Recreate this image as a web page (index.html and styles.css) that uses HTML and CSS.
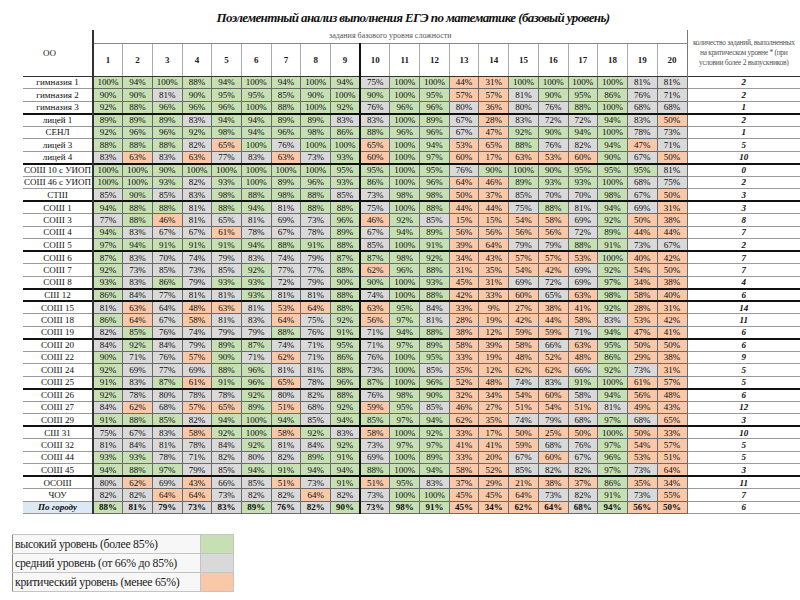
FILE: index.html
```html
<!DOCTYPE html>
<html lang="ru">
<head>
<meta charset="utf-8">
<title>Поэлементный анализ</title>
<link rel="stylesheet" href="styles.css">
</head>
<body>
<h1 class="title">Поэлементный анализ выполнения ЕГЭ по математике (базовый уровень)</h1>
<table class="grid">
<colgroup><col class="c-oo"><col class="c-n"><col class="c-n"><col class="c-n"><col class="c-n"><col class="c-n"><col class="c-n"><col class="c-n"><col class="c-n"><col class="c-n"><col class="c-n"><col class="c-n"><col class="c-n"><col class="c-n"><col class="c-n"><col class="c-n"><col class="c-n"><col class="c-n"><col class="c-n"><col class="c-n"><col class="c-n"><col class="c-cnt"></colgroup>
<thead>
<tr class="h1"><th rowspan="2" class="oo-h">ОО</th><th colspan="20" class="sub">задания базового уровня сложности</th><th rowspan="2" class="cnt-h">количество заданий, выполненных<br>на критическом уровне * (при<br>условии более 2 выпускников)</th></tr>
<tr class="h2"><th>1</th><th>2</th><th>3</th><th>4</th><th>5</th><th>6</th><th>7</th><th>8</th><th>9</th><th>10</th><th>11</th><th>12</th><th>13</th><th>14</th><th>15</th><th>16</th><th>17</th><th>18</th><th>19</th><th>20</th></tr>
</thead>
<tbody>
<tr class="first"><td class="oo">гимназия 1</td><td class="g">100%</td><td class="g">94%</td><td class="g">100%</td><td class="g">88%</td><td class="g">94%</td><td class="g">100%</td><td class="g">94%</td><td class="g">100%</td><td class="g">94%</td><td class="s">75%</td><td class="g">100%</td><td class="g">100%</td><td class="o">44%</td><td class="o">31%</td><td class="g">100%</td><td class="g">100%</td><td class="g">100%</td><td class="g">100%</td><td class="s">81%</td><td class="s">81%</td><td class="cnt">2</td></tr>
<tr><td class="oo">гимназия 2</td><td class="g">90%</td><td class="g">90%</td><td class="s">81%</td><td class="g">90%</td><td class="g">95%</td><td class="g">95%</td><td class="g">85%</td><td class="g">90%</td><td class="g">100%</td><td class="g">90%</td><td class="g">100%</td><td class="g">95%</td><td class="o">57%</td><td class="o">57%</td><td class="s">81%</td><td class="g">90%</td><td class="g">95%</td><td class="g">86%</td><td class="s">76%</td><td class="s">71%</td><td class="cnt">2</td></tr>
<tr><td class="oo">гимназия 3</td><td class="g">92%</td><td class="g">88%</td><td class="g">96%</td><td class="g">96%</td><td class="g">96%</td><td class="g">100%</td><td class="g">88%</td><td class="g">100%</td><td class="g">92%</td><td class="s">76%</td><td class="g">96%</td><td class="g">96%</td><td class="s">80%</td><td class="o">36%</td><td class="s">80%</td><td class="s">76%</td><td class="g">88%</td><td class="g">100%</td><td class="s">68%</td><td class="s">68%</td><td class="cnt">1</td></tr>
<tr class="grp"><td class="oo">лицей 1</td><td class="g">89%</td><td class="g">89%</td><td class="g">89%</td><td class="s">83%</td><td class="g">94%</td><td class="g">94%</td><td class="g">89%</td><td class="g">89%</td><td class="s">83%</td><td class="s">83%</td><td class="g">100%</td><td class="g">89%</td><td class="s">67%</td><td class="o">28%</td><td class="s">83%</td><td class="s">72%</td><td class="s">72%</td><td class="g">94%</td><td class="s">83%</td><td class="o">50%</td><td class="cnt">2</td></tr>
<tr><td class="oo">СЕНЛ</td><td class="g">92%</td><td class="g">96%</td><td class="g">96%</td><td class="g">92%</td><td class="g">98%</td><td class="g">94%</td><td class="g">96%</td><td class="g">98%</td><td class="g">86%</td><td class="g">88%</td><td class="g">96%</td><td class="g">96%</td><td class="s">67%</td><td class="o">47%</td><td class="g">92%</td><td class="g">90%</td><td class="g">94%</td><td class="g">100%</td><td class="s">78%</td><td class="s">73%</td><td class="cnt">1</td></tr>
<tr><td class="oo">лицей 3</td><td class="g">88%</td><td class="g">88%</td><td class="g">88%</td><td class="s">82%</td><td class="o">65%</td><td class="g">100%</td><td class="s">76%</td><td class="g">100%</td><td class="g">100%</td><td class="o">65%</td><td class="g">100%</td><td class="g">94%</td><td class="o">53%</td><td class="o">65%</td><td class="g">88%</td><td class="s">76%</td><td class="s">82%</td><td class="g">94%</td><td class="o">47%</td><td class="s">71%</td><td class="cnt">5</td></tr>
<tr><td class="oo">лицей 4</td><td class="s">83%</td><td class="o">63%</td><td class="s">83%</td><td class="o">63%</td><td class="s">77%</td><td class="s">83%</td><td class="o">63%</td><td class="s">73%</td><td class="g">93%</td><td class="o">60%</td><td class="g">100%</td><td class="g">97%</td><td class="o">60%</td><td class="o">17%</td><td class="o">63%</td><td class="o">53%</td><td class="o">60%</td><td class="g">90%</td><td class="s">67%</td><td class="o">50%</td><td class="cnt">10</td></tr>
<tr class="grp"><td class="oo">СОШ 10 с УИОП</td><td class="g">100%</td><td class="g">100%</td><td class="g">90%</td><td class="g">100%</td><td class="g">100%</td><td class="g">100%</td><td class="g">100%</td><td class="g">100%</td><td class="g">95%</td><td class="g">95%</td><td class="g">100%</td><td class="g">95%</td><td class="s">76%</td><td class="g">90%</td><td class="g">100%</td><td class="g">90%</td><td class="g">95%</td><td class="g">95%</td><td class="g">95%</td><td class="s">81%</td><td class="cnt">0</td></tr>
<tr><td class="oo">СОШ 46 с УИОП</td><td class="g">100%</td><td class="g">100%</td><td class="g">93%</td><td class="s">82%</td><td class="g">93%</td><td class="g">100%</td><td class="g">89%</td><td class="g">96%</td><td class="g">93%</td><td class="g">86%</td><td class="g">100%</td><td class="g">96%</td><td class="o">64%</td><td class="o">46%</td><td class="g">89%</td><td class="g">93%</td><td class="g">93%</td><td class="g">100%</td><td class="s">68%</td><td class="s">75%</td><td class="cnt">2</td></tr>
<tr><td class="oo">СТШ</td><td class="s">85%</td><td class="g">90%</td><td class="s">85%</td><td class="s">83%</td><td class="g">98%</td><td class="g">88%</td><td class="g">98%</td><td class="g">88%</td><td class="s">85%</td><td class="s">73%</td><td class="g">98%</td><td class="g">98%</td><td class="o">50%</td><td class="o">37%</td><td class="s">85%</td><td class="s">70%</td><td class="s">70%</td><td class="g">98%</td><td class="s">67%</td><td class="o">50%</td><td class="cnt">3</td></tr>
<tr class="grp"><td class="oo">СОШ 1</td><td class="g">94%</td><td class="g">88%</td><td class="g">88%</td><td class="s">81%</td><td class="g">88%</td><td class="g">94%</td><td class="s">81%</td><td class="g">88%</td><td class="g">88%</td><td class="s">75%</td><td class="g">100%</td><td class="g">88%</td><td class="o">44%</td><td class="o">44%</td><td class="s">75%</td><td class="g">88%</td><td class="s">81%</td><td class="g">94%</td><td class="s">69%</td><td class="o">31%</td><td class="cnt">3</td></tr>
<tr><td class="oo">СОШ 3</td><td class="s">77%</td><td class="g">88%</td><td class="o">46%</td><td class="s">81%</td><td class="s">65%</td><td class="s">81%</td><td class="s">69%</td><td class="s">73%</td><td class="g">96%</td><td class="o">46%</td><td class="g">92%</td><td class="s">85%</td><td class="o">15%</td><td class="o">15%</td><td class="o">54%</td><td class="o">58%</td><td class="s">69%</td><td class="g">92%</td><td class="o">50%</td><td class="o">38%</td><td class="cnt">8</td></tr>
<tr><td class="oo">СОШ 4</td><td class="g">94%</td><td class="s">83%</td><td class="s">67%</td><td class="s">67%</td><td class="o">61%</td><td class="s">78%</td><td class="s">67%</td><td class="s">78%</td><td class="g">89%</td><td class="s">67%</td><td class="g">94%</td><td class="g">89%</td><td class="o">56%</td><td class="o">56%</td><td class="o">56%</td><td class="o">56%</td><td class="s">72%</td><td class="g">89%</td><td class="o">44%</td><td class="o">44%</td><td class="cnt">7</td></tr>
<tr><td class="oo">СОШ 5</td><td class="g">97%</td><td class="g">94%</td><td class="g">91%</td><td class="g">91%</td><td class="g">91%</td><td class="g">94%</td><td class="g">88%</td><td class="g">91%</td><td class="g">88%</td><td class="s">85%</td><td class="g">100%</td><td class="g">91%</td><td class="o">39%</td><td class="o">64%</td><td class="s">79%</td><td class="s">79%</td><td class="g">88%</td><td class="g">91%</td><td class="s">73%</td><td class="s">67%</td><td class="cnt">2</td></tr>
<tr class="grp"><td class="oo">СОШ 6</td><td class="g">87%</td><td class="s">83%</td><td class="s">70%</td><td class="s">74%</td><td class="s">79%</td><td class="s">83%</td><td class="s">74%</td><td class="s">79%</td><td class="g">87%</td><td class="g">87%</td><td class="g">98%</td><td class="g">92%</td><td class="o">34%</td><td class="o">43%</td><td class="o">57%</td><td class="o">57%</td><td class="o">53%</td><td class="g">100%</td><td class="o">40%</td><td class="o">42%</td><td class="cnt">7</td></tr>
<tr><td class="oo">СОШ 7</td><td class="g">92%</td><td class="s">73%</td><td class="s">85%</td><td class="s">73%</td><td class="s">85%</td><td class="g">92%</td><td class="s">77%</td><td class="s">77%</td><td class="g">88%</td><td class="o">62%</td><td class="g">96%</td><td class="g">88%</td><td class="o">31%</td><td class="o">35%</td><td class="o">54%</td><td class="o">42%</td><td class="s">69%</td><td class="g">92%</td><td class="o">54%</td><td class="o">50%</td><td class="cnt">7</td></tr>
<tr><td class="oo">СОШ 8</td><td class="g">93%</td><td class="s">83%</td><td class="g">86%</td><td class="s">79%</td><td class="g">93%</td><td class="g">93%</td><td class="s">72%</td><td class="s">79%</td><td class="g">90%</td><td class="g">90%</td><td class="g">100%</td><td class="g">93%</td><td class="o">45%</td><td class="o">31%</td><td class="s">69%</td><td class="s">72%</td><td class="s">69%</td><td class="g">97%</td><td class="o">34%</td><td class="o">38%</td><td class="cnt">4</td></tr>
<tr class="grp"><td class="oo">СШ 12</td><td class="g">86%</td><td class="s">84%</td><td class="s">77%</td><td class="s">81%</td><td class="s">81%</td><td class="g">93%</td><td class="s">81%</td><td class="s">81%</td><td class="g">88%</td><td class="s">74%</td><td class="g">100%</td><td class="g">88%</td><td class="o">42%</td><td class="o">33%</td><td class="o">60%</td><td class="s">65%</td><td class="o">63%</td><td class="g">98%</td><td class="o">58%</td><td class="o">40%</td><td class="cnt">6</td></tr>
<tr class="grp"><td class="oo">СОШ 15</td><td class="s">81%</td><td class="o">63%</td><td class="s">64%</td><td class="o">48%</td><td class="o">63%</td><td class="s">81%</td><td class="o">53%</td><td class="o">64%</td><td class="g">88%</td><td class="o">63%</td><td class="g">95%</td><td class="s">84%</td><td class="o">33%</td><td class="o">9%</td><td class="o">27%</td><td class="o">38%</td><td class="o">41%</td><td class="g">92%</td><td class="o">28%</td><td class="o">31%</td><td class="cnt">14</td></tr>
<tr><td class="oo">СОШ 18</td><td class="g">86%</td><td class="o">64%</td><td class="s">67%</td><td class="o">58%</td><td class="s">81%</td><td class="s">83%</td><td class="o">64%</td><td class="s">75%</td><td class="g">92%</td><td class="o">56%</td><td class="g">97%</td><td class="s">81%</td><td class="o">28%</td><td class="o">19%</td><td class="o">42%</td><td class="o">44%</td><td class="o">58%</td><td class="s">83%</td><td class="o">53%</td><td class="o">42%</td><td class="cnt">11</td></tr>
<tr><td class="oo">СОШ 19</td><td class="s">82%</td><td class="g">85%</td><td class="s">76%</td><td class="s">74%</td><td class="s">79%</td><td class="s">79%</td><td class="g">88%</td><td class="s">76%</td><td class="g">91%</td><td class="s">71%</td><td class="g">94%</td><td class="g">88%</td><td class="o">38%</td><td class="o">12%</td><td class="o">59%</td><td class="o">59%</td><td class="s">71%</td><td class="g">94%</td><td class="o">47%</td><td class="o">41%</td><td class="cnt">6</td></tr>
<tr class="grp"><td class="oo">СОШ 20</td><td class="s">84%</td><td class="g">92%</td><td class="s">84%</td><td class="s">79%</td><td class="g">89%</td><td class="g">87%</td><td class="s">74%</td><td class="s">71%</td><td class="g">95%</td><td class="s">71%</td><td class="g">97%</td><td class="g">89%</td><td class="o">58%</td><td class="o">39%</td><td class="o">58%</td><td class="s">66%</td><td class="o">63%</td><td class="g">95%</td><td class="o">50%</td><td class="o">50%</td><td class="cnt">6</td></tr>
<tr><td class="oo">СОШ 22</td><td class="g">90%</td><td class="s">71%</td><td class="s">76%</td><td class="o">57%</td><td class="g">90%</td><td class="s">71%</td><td class="o">62%</td><td class="s">71%</td><td class="g">86%</td><td class="s">76%</td><td class="g">100%</td><td class="g">95%</td><td class="o">33%</td><td class="o">19%</td><td class="o">48%</td><td class="o">52%</td><td class="o">48%</td><td class="g">86%</td><td class="o">29%</td><td class="o">38%</td><td class="cnt">9</td></tr>
<tr><td class="oo">СОШ 24</td><td class="g">92%</td><td class="s">69%</td><td class="s">77%</td><td class="s">69%</td><td class="g">88%</td><td class="g">96%</td><td class="s">81%</td><td class="s">81%</td><td class="g">88%</td><td class="s">73%</td><td class="g">100%</td><td class="s">85%</td><td class="o">35%</td><td class="o">12%</td><td class="o">62%</td><td class="o">62%</td><td class="s">66%</td><td class="g">92%</td><td class="s">73%</td><td class="o">31%</td><td class="cnt">5</td></tr>
<tr><td class="oo">СОШ 25</td><td class="g">91%</td><td class="s">83%</td><td class="g">87%</td><td class="o">61%</td><td class="g">91%</td><td class="g">96%</td><td class="o">65%</td><td class="s">78%</td><td class="g">96%</td><td class="g">87%</td><td class="g">100%</td><td class="g">96%</td><td class="o">52%</td><td class="o">48%</td><td class="s">74%</td><td class="s">83%</td><td class="g">91%</td><td class="g">100%</td><td class="o">61%</td><td class="o">57%</td><td class="cnt">5</td></tr>
<tr class="grp"><td class="oo">СОШ 26</td><td class="g">92%</td><td class="s">78%</td><td class="s">80%</td><td class="s">78%</td><td class="s">78%</td><td class="g">92%</td><td class="s">80%</td><td class="s">82%</td><td class="g">88%</td><td class="s">76%</td><td class="g">98%</td><td class="g">90%</td><td class="o">32%</td><td class="o">34%</td><td class="o">54%</td><td class="o">60%</td><td class="s">58%</td><td class="g">94%</td><td class="o">56%</td><td class="o">48%</td><td class="cnt">6</td></tr>
<tr><td class="oo">СОШ 27</td><td class="s">84%</td><td class="o">62%</td><td class="s">68%</td><td class="o">57%</td><td class="o">65%</td><td class="g">89%</td><td class="o">51%</td><td class="s">68%</td><td class="g">92%</td><td class="o">59%</td><td class="g">95%</td><td class="s">85%</td><td class="o">46%</td><td class="o">27%</td><td class="o">51%</td><td class="o">54%</td><td class="o">51%</td><td class="s">81%</td><td class="o">49%</td><td class="o">43%</td><td class="cnt">12</td></tr>
<tr><td class="oo">СОШ 29</td><td class="g">91%</td><td class="g">88%</td><td class="g">85%</td><td class="s">82%</td><td class="g">94%</td><td class="g">100%</td><td class="g">94%</td><td class="s">85%</td><td class="g">94%</td><td class="g">85%</td><td class="g">97%</td><td class="g">94%</td><td class="o">62%</td><td class="o">35%</td><td class="s">74%</td><td class="s">79%</td><td class="s">68%</td><td class="g">97%</td><td class="s">68%</td><td class="o">65%</td><td class="cnt">3</td></tr>
<tr class="grp"><td class="oo">СШ 31</td><td class="s">75%</td><td class="s">67%</td><td class="s">83%</td><td class="o">58%</td><td class="g">92%</td><td class="g">100%</td><td class="o">58%</td><td class="g">92%</td><td class="s">83%</td><td class="o">58%</td><td class="g">100%</td><td class="g">92%</td><td class="o">33%</td><td class="o">17%</td><td class="o">50%</td><td class="o">25%</td><td class="o">50%</td><td class="g">100%</td><td class="o">50%</td><td class="o">33%</td><td class="cnt">10</td></tr>
<tr><td class="oo">СОШ 32</td><td class="s">81%</td><td class="s">84%</td><td class="s">81%</td><td class="s">78%</td><td class="s">84%</td><td class="g">92%</td><td class="s">81%</td><td class="s">84%</td><td class="g">92%</td><td class="s">73%</td><td class="g">97%</td><td class="g">97%</td><td class="o">41%</td><td class="o">41%</td><td class="o">59%</td><td class="s">68%</td><td class="s">76%</td><td class="g">97%</td><td class="o">54%</td><td class="o">57%</td><td class="cnt">5</td></tr>
<tr><td class="oo">СОШ 44</td><td class="g">93%</td><td class="g">93%</td><td class="s">78%</td><td class="s">71%</td><td class="s">82%</td><td class="s">80%</td><td class="s">82%</td><td class="g">89%</td><td class="g">91%</td><td class="s">69%</td><td class="g">100%</td><td class="g">89%</td><td class="o">33%</td><td class="o">20%</td><td class="s">67%</td><td class="o">60%</td><td class="s">67%</td><td class="g">96%</td><td class="o">53%</td><td class="o">51%</td><td class="cnt">5</td></tr>
<tr><td class="oo">СОШ 45</td><td class="g">94%</td><td class="g">88%</td><td class="g">97%</td><td class="s">79%</td><td class="s">85%</td><td class="g">94%</td><td class="g">91%</td><td class="g">94%</td><td class="g">94%</td><td class="g">88%</td><td class="g">100%</td><td class="g">94%</td><td class="o">58%</td><td class="o">52%</td><td class="s">85%</td><td class="s">82%</td><td class="s">82%</td><td class="g">97%</td><td class="s">73%</td><td class="o">64%</td><td class="cnt">3</td></tr>
<tr class="grp"><td class="oo">ОСОШ</td><td class="s">80%</td><td class="o">62%</td><td class="s">69%</td><td class="o">43%</td><td class="s">66%</td><td class="s">85%</td><td class="o">51%</td><td class="s">73%</td><td class="g">91%</td><td class="o">51%</td><td class="g">95%</td><td class="s">83%</td><td class="o">37%</td><td class="o">29%</td><td class="o">21%</td><td class="o">38%</td><td class="o">37%</td><td class="g">86%</td><td class="o">35%</td><td class="o">34%</td><td class="cnt">11</td></tr>
<tr><td class="oo">ЧОУ</td><td class="s">82%</td><td class="s">82%</td><td class="o">64%</td><td class="o">64%</td><td class="s">73%</td><td class="s">82%</td><td class="s">82%</td><td class="o">64%</td><td class="s">82%</td><td class="s">73%</td><td class="g">100%</td><td class="g">100%</td><td class="o">45%</td><td class="o">45%</td><td class="o">64%</td><td class="s">73%</td><td class="s">82%</td><td class="g">91%</td><td class="s">73%</td><td class="o">55%</td><td class="cnt">7</td></tr>
<tr class="total"><td class="oo city">По городу</td><td class="g">88%</td><td class="s">81%</td><td class="s">79%</td><td class="s">73%</td><td class="s">83%</td><td class="g">89%</td><td class="s">76%</td><td class="s">82%</td><td class="g">90%</td><td class="s">73%</td><td class="g">98%</td><td class="g">91%</td><td class="o">45%</td><td class="o">34%</td><td class="o">62%</td><td class="o">64%</td><td class="s">68%</td><td class="g">94%</td><td class="o">56%</td><td class="o">50%</td><td class="cnt">6</td></tr>
</tbody>
</table>
<table class="legend">
<tr><td class="lt"><span class="lt-text">высокий уровень (более 85%)</span></td><td class="sw g"></td></tr>
<tr><td class="lt"><span class="lt-text">средний уровень (от 66% до 85%)</span></td><td class="sw s"></td></tr>
<tr><td class="lt"><span class="lt-text">критический уровень (менее 65%)</span></td><td class="sw o"></td></tr>
</table>
</body>
</html>
```

FILE: styles.css
```css
* { box-sizing: border-box; }
html, body, table, th, td, h1 {
  font-family: "Liberation Serif", "DejaVu Serif", serif;
}
body {
  margin: 0;
  background: #fff;
  color: #1b1b1b;
}
.title {
  margin: 0;
  padding: 9px 0 0 26px;
  height: 30px;
  font-size: 13px;
  letter-spacing: -0.6px;
  line-height: 18px;
  font-weight: bold;
  font-style: italic;
  text-align: center;
  color: #111;
}
.grid {
  margin-left: 23px;
  width: 777px;
  table-layout: fixed;
  border-collapse: collapse;
  font-size: 9px;
  line-height: 10px;
}
.grid col.c-oo { width: 70px; }
.grid col.c-n { width: 29.7px; }
.grid col.c-cnt { width: 113px; }
.grid th, .grid td {
  padding: 0;
  text-align: center;
  white-space: nowrap;
  overflow: hidden;
}
.h1 { height: 13px; }
.h2 { height: 33px; }
.oo-h {
  font-weight: normal;
  font-size: 9px;
  padding-right: 16px !important;
  border-right: 2px solid #333;
}
.sub {
  font-weight: normal;
  font-size: 8px;
  color: #555;
  border-bottom: 1px solid #888;
}
.cnt-h {
  font-weight: normal;
  font-size: 7.5px;
  line-height: 10px;
  color: #555;
  border-left: 1px solid #777;
  letter-spacing: -0.3px;
}
.h2 th {
  font-weight: bold;
  border-left: 1px solid #aaa;
  border-right: 1px solid #aaa;
  border-bottom: 1px solid #333;
}
.grid tbody tr { height: 12.5px; }
.grid tbody td {
  border: 1px solid #6a6a6a;
  color: #0d0d0d;
}
.grid tbody td.oo {
  border-left: none;
  border-right: 2px solid #333;
  border-top: 1px solid #9a9a9a;
  border-bottom: 1px solid #9a9a9a;
}
.grid tbody td.cnt {
  border-right: none;
  border-top: 1px solid #9a9a9a;
  border-bottom: 1px solid #9a9a9a;
  font-weight: bold;
  font-style: italic;
}
.grid tbody td:nth-child(11),
.h2 th:nth-child(10) { border-left: 2px solid #111; }
.grid tbody tr.grp td { border-top: 2px solid #111; }
.grid tbody tr.first td { border-top: 1px solid #333; }
.grid td.city {
  background: #dce9f5;
  font-weight: bold;
  font-style: italic;
}
.total td { font-weight: bold; }
.g { background: #c6e0b4; }
.s { background: #d9d9d9; }
.o { background: #f8c8a8; }
.legend {
  margin: 20px 0 0 12px;
  border-collapse: collapse;
  width: 221px;
  table-layout: fixed;
}
.legend tr { height: 19px; }
.legend td {
  padding: 0 0 0 2px;
  border-top: 1px solid #c4c4c4;
  border-bottom: 1px solid #c4c4c4;
}
.legend td.lt {
  width: 188px;
  font-size: 13.5px;
  line-height: 18px;
  color: #1a1a1a;
  background: #f7f7f7;
  border-left: 1px solid #8a8a8a;
  white-space: nowrap;
  overflow: hidden;
}
.lt-text {
  display: inline-block;
  letter-spacing: -0.3px;
  transform: scaleX(0.875);
  transform-origin: 0 50%;
}
.legend td.sw {
  width: 33px;
  border-left: 1px solid #c4c4c4;
  border-right: 1px solid #c4c4c4;
}
```
